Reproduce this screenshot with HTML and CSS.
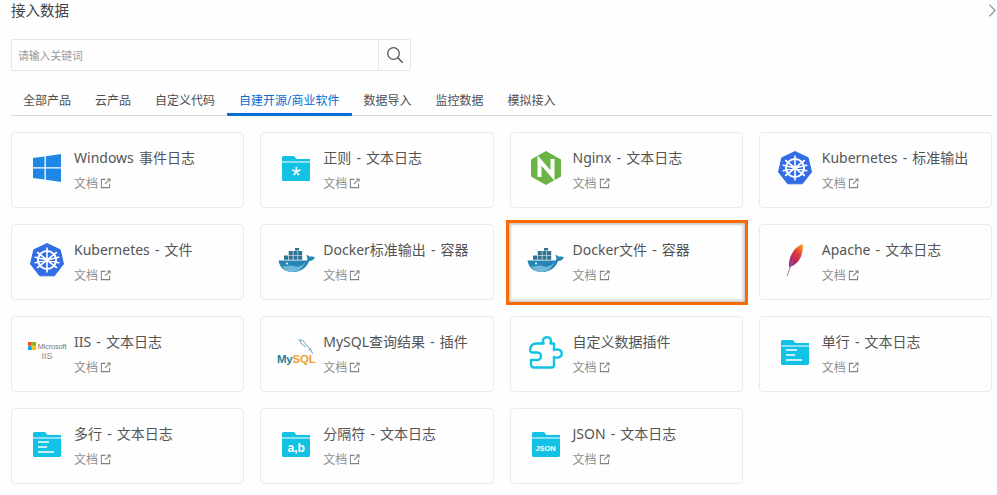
FILE: index.html
```html
<!DOCTYPE html>
<html lang="zh-CN">
<head>
<meta charset="utf-8">
<title>接入数据</title>
<link rel="stylesheet" href="styles.css">
</head>
<body>
<svg class="defs" width="0" height="0" aria-hidden="true">
  <defs>
    <linearGradient id="feather" x1="0.8" y1="0" x2="0.2" y2="1">
      <stop offset="0" stop-color="#f69923"/>
      <stop offset="0.35" stop-color="#e0413a"/>
      <stop offset="0.7" stop-color="#b8255f"/>
      <stop offset="1" stop-color="#8e3b8c"/>
    </linearGradient>
    <symbol id="ext" viewBox="0 0 12 12">
      <path d="M6 1.500H1.500v9h9V6" fill="none" stroke="#808080" stroke-width="1.100"/>
      <path d="M5.500 6.500 10.800 1.200M7.800 1h3.200v3.200" fill="none" stroke="#808080" stroke-width="1.100"/>
    </symbol>
    <symbol id="folder" viewBox="0 0 28 25">
      <path d="M1.500 0H12l2.500 3H28V5.500H0V1.500A1.500 1.500 0 0 1 1.500 0Z" fill="#12c2e4"/>
      <path d="M0 6.500H28V23.500A1.500 1.500 0 0 1 26.500 25H1.500A1.500 1.500 0 0 1 0 23.500Z" fill="#12c2e4"/>
    </symbol>
    <symbol id="k8s" viewBox="0 0 34 34">
      <path d="M17 .5 30.200 6.800 33.500 21 24.300 32.800H9.700L.5 21 3.800 6.800Z" fill="#326de6" stroke="#326de6" stroke-linejoin="round" stroke-width="1"/>
      <g fill="none" stroke="#fff">
        <circle cx="17" cy="17" r="9" stroke-width="2"/>
        <path stroke-width="1.600" stroke-linecap="round" d="M17 5V29M7.600 9.500 26.400 24.500M26.400 9.500 7.600 24.500M5.300 19.700 28.700 14.300M28.700 19.700 5.300 14.300"/>
      </g>
      <circle cx="17" cy="17" r="2.400" fill="#fff"/>
    </symbol>
    <symbol id="docker" viewBox="0 0 38 24">
      <path d="M.5 12.500H29c.7-2 .4-3.500-.7-5 1.600-.9 2.600 0 3.400 1.300 1.700-.6 3.300-.5 5.300.4-1.400 3-3.600 3.600-5.700 3.700C28.500 19.500 23 24 14.500 24 6 24 1.500 19 .5 12.500Z" fill="#2585b5"/>
      <path d="M4 18c3 1 5.500 0 8-.5 3-.5 5 2 9 1 3-.8 5-2.500 6.500-4.500C25 20 20 24 14.500 24 10 24 6 21.500 4 18Z" fill="#6fb8d8"/>
      <g fill="#2f7493">
        <path d="M6 7.500h4.100v4.300H6zM10.700 7.500h4.100v4.300h-4.100zM15.400 7.500h4.100v4.300h-4.100zM20.100 7.500h4.100v4.300h-4.100z"/>
        <path d="M10.700 2.900h4.100v4.100h-4.100zM15.400 2.900h4.100v4.100h-4.100zM20.100 2.900h4.100v4.100h-4.100z"/>
        <path d="M17 0h4.100v2.500H17z"/>
      </g>
      <circle cx="9" cy="15.500" r="1" fill="#fff"/>
    </symbol>
  </defs>
</svg>

<main class="panel">
  <header class="head">
    <h1 class="title">接入数据</h1>
    <svg class="close" viewBox="0 0 10 16" aria-hidden="true"><path d="M1.500 1.500 8 8 1.500 14.500" fill="none" stroke="#8a8a8a" stroke-width="1.200"/></svg>
  </header>

  <div class="search">
    <input class="search-input" type="text" placeholder="请输入关键词">
    <button class="search-btn" type="button" aria-label="搜索">
      <svg viewBox="0 0 18 18" width="18" height="18"><circle cx="7.500" cy="7.500" r="5.800" fill="none" stroke="#555" stroke-width="1.300"/><path d="m11.800 11.800 5 5" stroke="#555" stroke-width="1.500"/></svg>
    </button>
  </div>

  <nav class="tabs">
    <a class="tab">全部产品</a>
    <a class="tab">云产品</a>
    <a class="tab">自定义代码</a>
    <a class="tab active">自建开源/商业软件</a>
    <a class="tab">数据导入</a>
    <a class="tab">监控数据</a>
    <a class="tab">模拟接入</a>
  </nav>

  <section class="grid">
    <article class="card">
      <div class="logo">
        <svg class="i-win" viewBox="0 0 28 28"><path fill="#1e86e5" d="M0 4 11.500 2.400V13.200H0ZM12.800 2.200 28 0V13.200H12.800ZM0 14.500H11.500V25.500L0 23.900ZM12.800 14.500H28V28L12.800 25.700Z"/></svg>
      </div>
      <div class="body"><div class="name">Windows 事件日志</div><a class="doc">文档<svg class="ext"><use href="#ext"/></svg></a></div>
    </article>
    <article class="card">
      <div class="logo">
        <svg class="i-folder"><use href="#folder"/></svg>
        <span class="f-label f-star">*</span>
      </div>
      <div class="body"><div class="name">正则 - 文本日志</div><a class="doc">文档<svg class="ext"><use href="#ext"/></svg></a></div>
    </article>
    <article class="card">
      <div class="logo">
        <svg class="i-nginx" viewBox="0 0 30 34"><path fill="#69b445" d="M15 0 30 8.500V25.500L15 34 0 25.500V8.500Z"/><path fill="none" stroke="#fff" stroke-width="4" d="M8.500 26V9.500L21.500 24.500V8"/></svg>
      </div>
      <div class="body"><div class="name">Nginx - 文本日志</div><a class="doc">文档<svg class="ext"><use href="#ext"/></svg></a></div>
    </article>
    <article class="card">
      <div class="logo"><svg class="i-k8s"><use href="#k8s"/></svg></div>
      <div class="body"><div class="name">Kubernetes - 标准输出</div><a class="doc">文档<svg class="ext"><use href="#ext"/></svg></a></div>
    </article>

    <article class="card">
      <div class="logo"><svg class="i-k8s"><use href="#k8s"/></svg></div>
      <div class="body"><div class="name">Kubernetes - 文件</div><a class="doc">文档<svg class="ext"><use href="#ext"/></svg></a></div>
    </article>
    <article class="card">
      <div class="logo"><svg class="i-docker"><use href="#docker"/></svg></div>
      <div class="body"><div class="name">Docker标准输出 - 容器</div><a class="doc">文档<svg class="ext"><use href="#ext"/></svg></a></div>
    </article>
    <article class="card highlighted">
      <div class="logo"><svg class="i-docker"><use href="#docker"/></svg></div>
      <div class="body"><div class="name">Docker文件 - 容器</div><a class="doc">文档<svg class="ext"><use href="#ext"/></svg></a></div>
    </article>
    <article class="card">
      <div class="logo">
        <svg class="i-feather" viewBox="0 0 18 32"><path fill="url(#feather)" d="M16.500 0C10.500 2 6 8 4 14 3 17.500 2.800 20 3.200 23.500L6 22C11 20 14 15.500 15.500 11 16.800 7 17.200 3.500 16.500 0Z"/><path d="M8 13 1 32" stroke="#a0558f" stroke-width=".8" fill="none"/></svg>
      </div>
      <div class="body"><div class="name">Apache - 文本日志</div><a class="doc">文档<svg class="ext"><use href="#ext"/></svg></a></div>
    </article>

    <article class="card">
      <div class="logo">
        <div class="ms">
          <div class="ms-row">
            <svg class="ms-flag" viewBox="0 0 9 9"><path fill="#f25022" d="M0 0h4.300v4.300H0z"/><path fill="#7fba00" d="M4.700 0H9v4.300H4.700z"/><path fill="#00a4ef" d="M0 4.700h4.300V9H0z"/><path fill="#ffb900" d="M4.700 4.700H9V9H4.700z"/></svg>
            <span class="ms-word">Microsoft</span>
          </div>
          <span class="ms-iis">IIS</span>
        </div>
      </div>
      <div class="body"><div class="name">IIS - 文本日志</div><a class="doc">文档<svg class="ext"><use href="#ext"/></svg></a></div>
    </article>
    <article class="card">
      <div class="logo">
        <div class="mysql">
          <svg class="dolphin" viewBox="0 0 15 16"><path d="M.5 1C3.500 .3 6 2 7.500 4.500 9 7 10.500 8.500 12.500 10L14.500 14.500M2 1.500C2.500 4 4.500 6.500 7.500 7.500M12.500 10 10.500 11.500" fill="none" stroke="#5b9ab8" stroke-width="1"/></svg>
          <span class="my-a">My</span><span class="my-b">SQL</span>
        </div>
      </div>
      <div class="body"><div class="name">MySQL查询结果 - 插件</div><a class="doc">文档<svg class="ext"><use href="#ext"/></svg></a></div>
    </article>
    <article class="card">
      <div class="logo">
        <svg class="i-puzzle" viewBox="0 0 34 33"><path fill="none" stroke="#12c2e4" stroke-width="2.400" stroke-linejoin="round" d="M11 7.500H14.500C13 3 15 1.200 18 1.200S23 3 21.500 7.500H25V14C29 12.500 32.800 14 32.800 17.500S29 22.500 25 21V29A2.500 2.500 0 0 1 22.500 31.500H5A3 3 0 0 1 2 28.500V24H8C11 24 12 22 12 20S10 16.500 8 16.500H3.500C1.500 16.500 1.200 15 1.200 13.500 1.200 11 3 7.500 7 7.500Z"/></svg>
      </div>
      <div class="body"><div class="name">自定义数据插件</div><a class="doc">文档<svg class="ext"><use href="#ext"/></svg></a></div>
    </article>
    <article class="card">
      <div class="logo">
        <svg class="i-folder"><use href="#folder"/></svg>
        <svg class="f-lines" viewBox="0 0 17 12"><path d="M0 1h11M0 6h9M0 11h16" stroke="#fff" stroke-width="1.400"/></svg>
      </div>
      <div class="body"><div class="name">单行 - 文本日志</div><a class="doc">文档<svg class="ext"><use href="#ext"/></svg></a></div>
    </article>

    <article class="card">
      <div class="logo">
        <svg class="i-folder"><use href="#folder"/></svg>
        <svg class="f-lines" viewBox="0 0 17 12"><path d="M0 1h11M0 6h9M0 11h16" stroke="#fff" stroke-width="1.400"/></svg>
      </div>
      <div class="body"><div class="name">多行 - 文本日志</div><a class="doc">文档<svg class="ext"><use href="#ext"/></svg></a></div>
    </article>
    <article class="card">
      <div class="logo">
        <svg class="i-folder"><use href="#folder"/></svg>
        <span class="f-label f-ab">a,b</span>
      </div>
      <div class="body"><div class="name">分隔符 - 文本日志</div><a class="doc">文档<svg class="ext"><use href="#ext"/></svg></a></div>
    </article>
    <article class="card">
      <div class="logo">
        <svg class="i-folder"><use href="#folder"/></svg>
        <span class="f-label f-json">JSON</span>
      </div>
      <div class="body"><div class="name">JSON - 文本日志</div><a class="doc">文档<svg class="ext"><use href="#ext"/></svg></a></div>
    </article>
  </section>
</main>
</body>
</html>
```

FILE: styles.css
```css
* { box-sizing: border-box; }
html, body { margin: 0; padding: 0; }
body {
  background: #fefefe;
  color: #333;
  font-family: "Noto Sans", "Noto Sans CJK SC", sans-serif;
  width: 997px;
  height: 495px;
  overflow: hidden;
}
.defs { position: absolute; }
.panel { padding: 0 5px 0 11px; }

.head { display: flex; justify-content: space-between; align-items: flex-start; height: 39px; }
.title { margin: 0; font-size: 14.500px; line-height: 21px; font-weight: 400; color: #444; }
.close { position: absolute; right: 0; top: 3px; width: 9px; height: 15px; }

.search { display: flex; width: 400px; height: 32px; border: 1px solid #e6e6e6; border-radius: 2px; }
.search-input { flex: 1; min-width: 0; border: 0; outline: 0; background: transparent; padding: 0 6px; font: inherit; font-size: 10.800px; color: #333; }
.search-input::placeholder { color: #999; opacity: 1; }
.search-btn { width: 32px; border: 0; border-left: 1px solid #e6e6e6; background: transparent; padding: 0; display: flex; align-items: center; justify-content: center; }

.tabs { display: flex; margin-top: 18px; height: 27px; border-bottom: 1px solid #d9d9d9; }
.tab { padding: 0 12px; font-size: 12px; line-height: 23px; height: 27px; color: #4f4f4f; white-space: nowrap; }
.active { color: #0a6cd0; border-bottom: 3px solid #0a6cd0; border-radius: 1px; }

.grid { display: grid; grid-template-columns: repeat(4, 233.250px); column-gap: 16px; row-gap: 16px; margin-top: 16px; grid-auto-rows: 76px; }
.card { position: relative; display: flex; align-items: flex-start; border: 1px solid #ebebeb; border-radius: 4px; background: #fefefe; }
.highlighted::after {
  content: "";
  position: absolute;
  inset: -5px -6px -6px -5px;
  border: 3px solid #f96a06;
  box-shadow: inset 0 0 3px 1px #b5b5b5;
  pointer-events: none;
}
.logo { position: relative; flex: none; width: 62px; height: 70px; padding-left: 8px; display: flex; align-items: center; justify-content: center; }
.body { padding-top: 15px; min-width: 0; }
.name { font-size: 14px; line-height: 20px; color: #555; white-space: nowrap; word-spacing: 1.500px; }
.doc { display: flex; align-items: center; margin-top: 7px; font-size: 12px; line-height: 17px; color: #8f8f8f; }
.ext { width: 11px; height: 11px; margin-left: 2px; }

.i-win { flex: none; width: 28px; height: 28px; }
.i-folder { flex: none; width: 28px; height: 25px; }
.i-k8s { flex: none; width: 34px; height: 34px; }
.i-nginx { flex: none; width: 30px; height: 34px; }
.i-docker { flex: none; width: 38px; height: 24px; margin-left: 1px; }
.i-feather { flex: none; width: 18px; height: 32px; }
.i-puzzle { flex: none; width: 34px; height: 33px; }
.f-lines { position: absolute; left: 26px; top: 32px; width: 17px; height: 12px; }
.f-label { position: absolute; left: 8px; right: 0; text-align: center; color: #fff; line-height: 1; font-family: "Liberation Sans", sans-serif; }
.f-star { top: 31px; font-size: 24px; }
.f-ab { top: 33px; font-size: 12px; font-weight: 700; }
.f-json { top: 36px; font-size: 7.500px; font-weight: 700; }

.ms { display: flex; flex-direction: column; align-items: center; margin-top: -1px; }
.ms-row { display: flex; align-items: center; gap: 2px; }
.ms-flag { width: 8px; height: 8px; }
.ms-word { font-size: 7.300px; line-height: 9px; color: #777; font-family: "Liberation Sans", sans-serif; letter-spacing: -0.100px; }
.ms-iis { font-size: 9px; line-height: 11px; color: #8a8a8a; font-family: "Liberation Sans", sans-serif; }

.mysql { position: relative; font-family: "Liberation Sans", sans-serif; font-size: 11.500px; font-weight: 700; line-height: 14px; margin-top: 14px; letter-spacing: -0.200px; }
.my-a { color: #2a7d98; }
.my-b { color: #f0a030; }
.dolphin { position: absolute; left: 21px; top: -13px; width: 15px; height: 16px; }
```
